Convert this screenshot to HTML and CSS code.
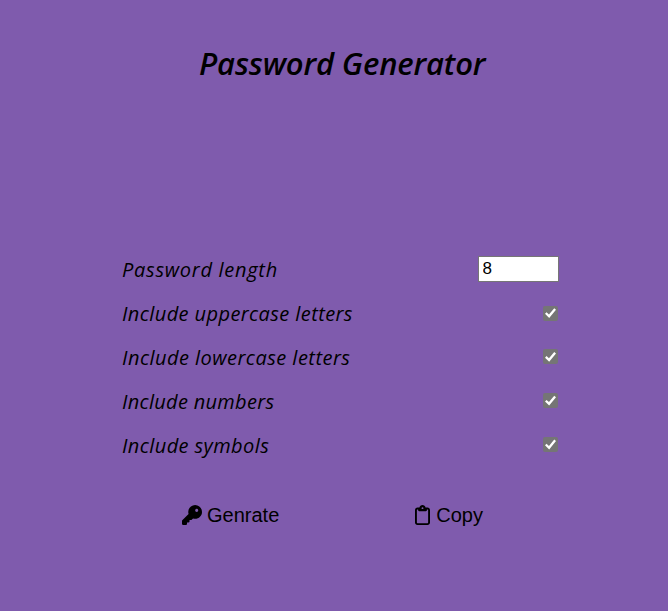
FILE: index.html
```html
<!DOCTYPE html>
<html lang="en">
<head>
<meta charset="utf-8">
<title>Password Generator</title>
<link rel="stylesheet" href="styles.css">
</head>
<body>
<main class="generator">
  <h1 class="title">Password Generator</h1>
  <form class="settings">
    <div class="setting"><label class="wide" for="length">Password length</label><input class="length" id="length" type="text" value="8"></div>
    <div class="setting"><label for="upper">Include uppercase letters</label><input class="check" id="upper" type="checkbox" checked></div>
    <div class="setting"><label class="loose" for="lower">Include lowercase letters</label><input class="check" id="lower" type="checkbox" checked></div>
    <div class="setting"><label class="tight" for="numbers">Include numbers</label><input class="check" id="numbers" type="checkbox" checked></div>
    <div class="setting"><label for="symbols">Include symbols</label><input class="check" id="symbols" type="checkbox" checked></div>
  </form>
  <div class="actions">
    <button class="action" type="button"><svg class="key" viewBox="0 0 512 512"><path d="M336 352c97.200 0 176-78.800 176-176S433.200 0 336 0S160 78.800 160 176c0 18.700 2.900 36.800 8.300 53.700L7 391c-4.500 4.500-7 10.600-7 17v80c0 13.300 10.700 24 24 24h80c13.300 0 24-10.700 24-24v-40h40c13.300 0 24-10.700 24-24v-40h40c6.400 0 12.500-2.500 17-7l33.300-33.300c16.900 5.400 35 8.300 53.700 8.300zM376 96a40 40 0 1 1 0 80 40 40 0 1 1 0-80z"/></svg>Genrate</button>
    <button class="action" type="button"><svg class="clipboard" viewBox="0 0 384 512"><path d="M280 64h40c35.300 0 64 28.700 64 64v320c0 35.300-28.700 64-64 64H64c-35.300 0-64-28.700-64-64V128c0-35.300 28.700-64 64-64h49.600C121 27.500 153.300 0 192 0s71 27.500 78.400 64H280zM64 112c-8.800 0-16 7.200-16 16v320c0 8.800 7.200 16 16 16h256c8.800 0 16-7.200 16-16V128c0-8.800-7.200-16-16-16h-16v24c0 13.300-10.700 24-24 24H104c-13.300 0-24-10.700-24-24v-24H64zm128-8a24 24 0 1 0 0-48 24 24 0 1 0 0 48z"/></svg>Copy</button>
  </div>
</main>
</body>
</html>
```
FILE: styles.css
```css
* { box-sizing: border-box; }
body {
  margin: 0;
  min-height: 611px;
  background: #7f5bad;
  color: #000;
  font-family: "Open Sans", sans-serif;
}
.generator { display: flex; flex-direction: column; padding-top: 41px; }
.title {
  margin: 0 0 0 199px;
  font-size: 31px;
  line-height: 44px;
  font-style: italic;
  font-weight: 600;
  letter-spacing: -0.15px;
  white-space: nowrap;
}
.settings { width: 437px; margin: 163px 0 0 122px; }
.setting {
  display: flex;
  align-items: center;
  justify-content: space-between;
  height: 43.8px;
  font-size: 20px;
  font-style: italic;
  letter-spacing: 0.41px;
  white-space: nowrap;
}
.wide { letter-spacing: 0.72px; }
.loose { letter-spacing: 0.47px; }
.tight { letter-spacing: 0.3px; }
.length {
  width: 81px;
  height: 26px;
  margin: 0 0 2px;
  padding: 0 0 0 3.5px;
  border: 1px solid #767676;
  background: #fff;
  font: 17px "Liberation Sans", sans-serif;
}
.check {
  appearance: none;
  width: 15px;
  height: 15px;
  margin: 0 1px 1px 0;
  border-radius: 2px;
  background: #757575;
  display: grid;
  place-items: center;
}
.check:checked::before {
  content: "";
  width: 11px;
  height: 11px;
  background: #fff;
  clip-path: polygon(0 56%, 14% 42%, 36% 62%, 84% 4%, 100% 18%, 38% 94%);
}
.actions { display: flex; gap: 136px; margin: 36px 0 0 182px; }
.action {
  display: flex;
  align-items: center;
  padding: 0;
  border: 0;
  background: none;
  color: #000;
  font: 20px/24px "Liberation Sans", sans-serif;
}
.key { width: 20px; height: 20px; margin-right: 5px; }
.clipboard { width: 15px; height: 20px; margin-right: 6px; }
```
